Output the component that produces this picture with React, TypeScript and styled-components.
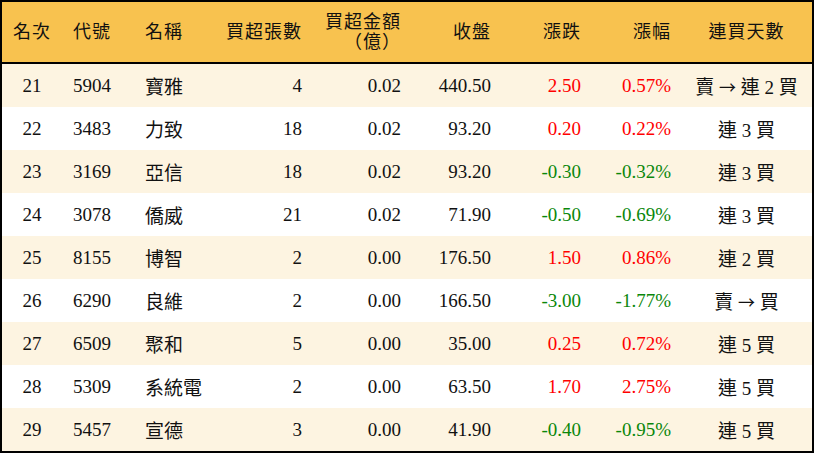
import React from "react";
import styled, { createGlobalStyle, css } from "styled-components";

interface IRow {
  rank: number;
  code: string;
  name: string;
  lots: number;
  amount: string;
  close: string;
  change: string;
  pct: string;
  streak: string;
}

const rows: IRow[] = [
  { rank: 21, code: "5904", name: "寶雅", lots: 4, amount: "0.02", close: "440.50", change: "2.50", pct: "0.57%", streak: "賣 → 連 2 買" },
  { rank: 22, code: "3483", name: "力致", lots: 18, amount: "0.02", close: "93.20", change: "0.20", pct: "0.22%", streak: "連 3 買" },
  { rank: 23, code: "3169", name: "亞信", lots: 18, amount: "0.02", close: "93.20", change: "-0.30", pct: "-0.32%", streak: "連 3 買" },
  { rank: 24, code: "3078", name: "僑威", lots: 21, amount: "0.02", close: "71.90", change: "-0.50", pct: "-0.69%", streak: "連 3 買" },
  { rank: 25, code: "8155", name: "博智", lots: 2, amount: "0.00", close: "176.50", change: "1.50", pct: "0.86%", streak: "連 2 買" },
  { rank: 26, code: "6290", name: "良維", lots: 2, amount: "0.00", close: "166.50", change: "-3.00", pct: "-1.77%", streak: "賣 → 買" },
  { rank: 27, code: "6509", name: "聚和", lots: 5, amount: "0.00", close: "35.00", change: "0.25", pct: "0.72%", streak: "連 5 買" },
  { rank: 28, code: "5309", name: "系統電", lots: 2, amount: "0.00", close: "63.50", change: "1.70", pct: "2.75%", streak: "連 5 買" },
  { rank: 29, code: "5457", name: "宣德", lots: 3, amount: "0.00", close: "41.90", change: "-0.40", pct: "-0.95%", streak: "連 5 買" },
];

const GlobalStyle = createGlobalStyle`
  html, body {
    margin: 0;
    padding: 0;
    background: #ffffff;
  }
`;

const COLUMNS = "60px 72px 80px 98px 99px 90px 90px 90px 131px";

const Frame = styled.div`
  width: 814px;
  box-sizing: border-box;
  border: 2px solid #000;
  font-family: "Liberation Serif", "Noto Sans CJK TC", serif;
  font-size: 19px;
  color: #111;
  text-spacing-trim: space-all;
`;

const HeaderRow = styled.div`
  display: grid;
  grid-template-columns: ${COLUMNS};
  height: 60px;
  background: #f8c24f;
  border-bottom: 2px solid #000;
  align-items: center;
`;

const Row = styled.div<{ $shaded: boolean }>`
  display: grid;
  grid-template-columns: ${COLUMNS};
  height: 43px;
  align-items: center;
  background: ${({ $shaded }) => ($shaded ? "#fdf4e1" : "#ffffff")};
`;

type Align = "left" | "right" | "center";

const Cell = styled.div<{ $align: Align; $tone?: "up" | "down" }>`
  padding: 0 10px;
  text-align: ${({ $align }) => $align};
  white-space: nowrap;
  ${({ $align }) =>
    $align === "left" &&
    css`
      padding-left: 11px;
    `}
  ${({ $tone }) =>
    $tone === "up"
      ? css`
          color: #ff0000;
        `
      : $tone === "down"
      ? css`
          color: #0a870a;
        `
      : ""}
`;

const HeadCell = styled(Cell)`
  font-size: 18px;
  line-height: 20px;
  letter-spacing: 1px;
`;

const Arrow = styled.span`
  font-family: "Noto Sans CJK TC", sans-serif;
  font-size: 17px;
`;

const aligns: Align[] = ["center", "left", "left", "right", "right", "right", "right", "right", "center"];

const tone = (v: string) => (v.startsWith("-") ? "down" : "up");

const Streak: React.FC<{ text: string }> = ({ text }) => {
  const parts = text.split("→");
  return (
    <>
      {parts.map((p, i) => (
        <React.Fragment key={i}>
          {i > 0 && <Arrow>→</Arrow>}
          {p}
        </React.Fragment>
      ))}
    </>
  );
};

const App: React.FC = () => {
  return (
    <>
      <GlobalStyle />
      <Frame>
        <HeaderRow>
          <HeadCell $align={aligns[0]}>名次</HeadCell>
          <HeadCell $align={aligns[1]}>代號</HeadCell>
          <HeadCell $align={aligns[2]}>名稱</HeadCell>
          <HeadCell $align={aligns[3]}>買超張數</HeadCell>
          <HeadCell $align={aligns[4]}>
            買超金額
            <br />
            （億）
          </HeadCell>
          <HeadCell $align={aligns[5]}>收盤</HeadCell>
          <HeadCell $align={aligns[6]}>漲跌</HeadCell>
          <HeadCell $align={aligns[7]}>漲幅</HeadCell>
          <HeadCell $align={aligns[8]}>連買天數</HeadCell>
        </HeaderRow>
        {rows.map((r, i) => (
          <Row key={r.rank} $shaded={i % 2 === 0}>
            <Cell $align={aligns[0]}>{r.rank}</Cell>
            <Cell $align={aligns[1]}>{r.code}</Cell>
            <Cell $align={aligns[2]}>{r.name}</Cell>
            <Cell $align={aligns[3]}>{r.lots}</Cell>
            <Cell $align={aligns[4]}>{r.amount}</Cell>
            <Cell $align={aligns[5]}>{r.close}</Cell>
            <Cell $align={aligns[6]} $tone={tone(r.change)}>{r.change}</Cell>
            <Cell $align={aligns[7]} $tone={tone(r.pct)}>{r.pct}</Cell>
            <Cell $align={aligns[8]}>
              <Streak text={r.streak} />
            </Cell>
          </Row>
        ))}
      </Frame>
    </>
  );
};

export default App;
